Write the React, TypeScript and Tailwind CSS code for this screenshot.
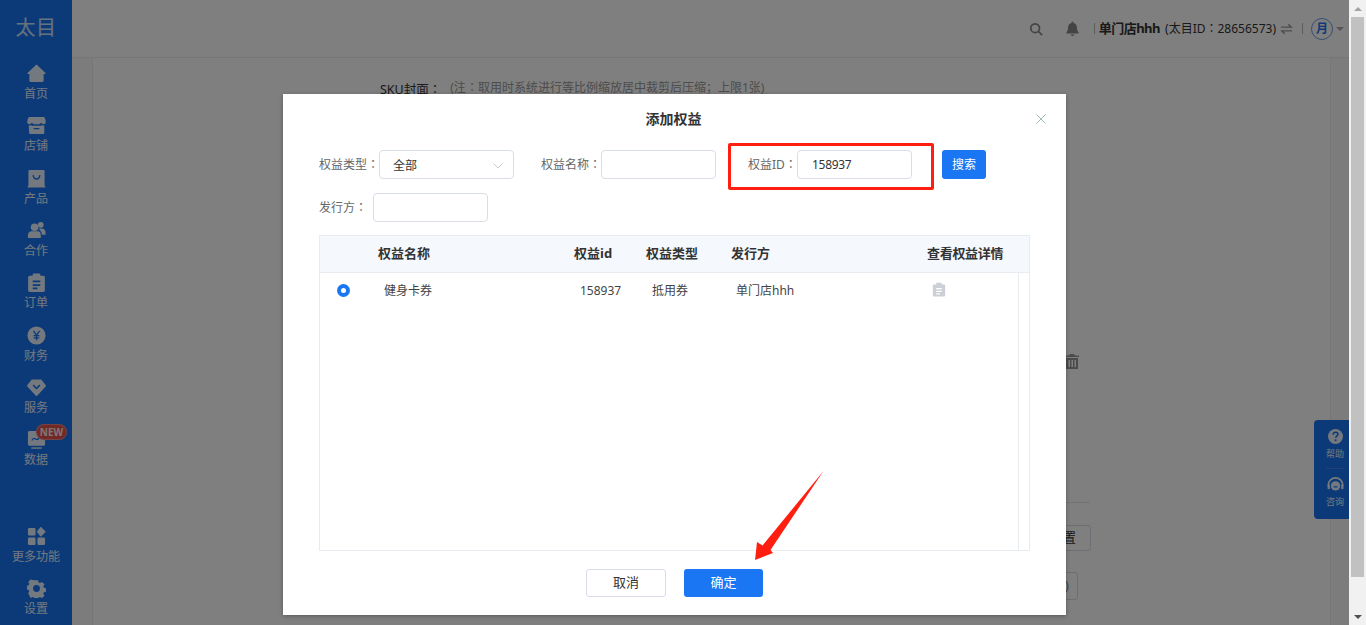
import React from 'react';

const FONT = '[font-family:"Noto_Sans","Noto_Sans_CJK_SC",sans-serif]';
const ICON = 'h-[19px] w-[19px]';

// full-width colon sits centred in its cell in the original, the JP face draws it that way
const Colon = () => <span className='[font-family:"Noto_Sans_CJK_JP",sans-serif]'>：</span>;

const HomeIcon = () => (
  <svg viewBox="0 0 20 20" className={ICON} fill="currentColor">
    <path d="M10 .5 0.5 9.600c-.3.4 0 .9.4.9h1.600v7.200c0 .7.5 1.300 1.200 1.300h12.600c.7 0 1.200-.6 1.200-1.300v-7.200h1.600c.4 0 .7-.5.4-.9z" />
  </svg>
);
const StoreIcon = () => (
  <svg viewBox="0 0 20 20" className={ICON} fill="currentColor">
    <path d="M3 1h14c1 0 1.800.7 2 1.600l.8 3.400c.1 1.500-1 2.600-2.400 2.600-1 0-1.900-.5-2.400-1.400h-.2c-.5.9-1.400 1.400-2.400 1.400H7.600c-1 0-1.900-.5-2.400-1.400H5c-.5.9-1.400 1.400-2.400 1.400C1.200 8.600.1 7.500.2 6L1 2.600C1.200 1.700 2 1 3 1z" />
    <path fillRule="evenodd" d="M1.800 10c.7.200 1.700.100 2.500-.3.800.4 1.500.5 2.300.5h6.800c.8 0 1.500-.1 2.300-.5.800.4 1.800.5 2.500.3v7.500c0 .8-.7 1.500-1.500 1.500h-13c-.8 0-1.400-.7-1.400-1.500zM7 12.500v1.500h6v-1.500z" />
  </svg>
);
const BagIcon = () => (
  <svg viewBox="0 0 20 20" className={ICON}>
    <path d="M3 1h14c1 0 1.500.6 1.500 1.500V17l1 2.500H.5l1-2.500V2.500C1.500 1.600 2 1 3 1z" fill="currentColor" />
    <path d="M6.500 6.500c.3 2.600 1.500 4 3.500 4s3.200-1.400 3.500-4" fill="none" stroke="#1875f0" strokeWidth="1.500" />
  </svg>
);
const UsersIcon = () => (
  <svg viewBox="0 0 20 20" className={ICON} fill="currentColor">
    <circle cx="8" cy="6.500" r="4" />
    <circle cx="14.500" cy="4" r="3" />
    <path d="M1 14.500c0-2.500 2-3.800 3.500-3.800h7c1.500 0 3 1.400 3 3.800V18H1z" />
    <path d="M13 8h2.500c2 0 4 1.500 4 4v2.500h-3.700C15.500 11.800 14 10 13 9.600z" />
  </svg>
);
const ClipboardIcon = ({ className = ICON }: { className?: string }) => (
  <svg viewBox="0 0 20 20" className={className} fill="currentColor">
    <path fillRule="evenodd" d="M6 1.500C6 .7 6.700.5 7.500.5h5c.8 0 1.500.2 1.500 1V3h3c1 0 1.800.8 1.800 1.800v13.400c0 1-.8 1.800-1.800 1.800H3c-1 0-1.800-.8-1.800-1.800V4.800C1.200 3.800 2 3 3 3h3zM6 8v1.800h8V8zm0 3.800v1.800h8v-1.800zm0 3.500V17h5v-1.700z" />
  </svg>
);
const YenIcon = () => (
  <svg viewBox="0 0 20 20" className={ICON}>
    <circle cx="10" cy="10" r="9.500" fill="currentColor" />
    <path d="M6.800 5.200 10 9.500l3.200-4.300M10 9.500v5.500M7 10.200h6M7 12.500h6" fill="none" stroke="#1875f0" strokeWidth="1.400" />
  </svg>
);
const DiamondIcon = () => (
  <svg viewBox="0 0 20 20" className={ICON}>
    <path d="M5 1.500h10l4.800 6.200c.2.300.2.700 0 1L11 18.500c-.5.600-1.500.600-2 0L.2 8.700c-.2-.3-.2-.7 0-1z" fill="currentColor" />
    <path d="m6.500 7.500 3.500 3.500 3.500-3.500" fill="none" stroke="#1875f0" strokeWidth="1.600" />
  </svg>
);
const ChartIcon = () => (
  <svg viewBox="0 0 20 20" className={ICON}>
    <path d="M2.500 1h15c.8 0 1.500.7 1.500 1.500v12.500c0 .8-.7 1.500-1.500 1.500h-15C1.700 16.500 1 15.800 1 15V2.500C1 1.700 1.700 1 2.500 1z" fill="currentColor" />
    <path d="M4.500 19h11" stroke="currentColor" strokeWidth="1.500" />
    <path d="M5 11c1.500-2.500 2.500-2.500 4-1.500s3 .5 4.500-2" fill="none" stroke="#1875f0" strokeWidth="1.300" />
  </svg>
);
const GridIcon = () => (
  <svg viewBox="0 0 20 20" className={ICON} fill="currentColor">
    <rect x="1" y="1" width="8" height="8" rx="1.500" />
    <path d="m15 .2 4.300 4.300c.3.300.3.700 0 1L15 9.800c-.3.300-.7.300-1 0l-3.300-4.300c-.3-.3-.3-.7 0-1L14 .2c.3-.2.700-.2 1 0z" />
    <rect x="1" y="11" width="8" height="8" rx="1.500" />
    <rect x="11" y="11" width="8" height="8" rx="1.500" />
  </svg>
);
const GearIcon = () => (
  <svg viewBox="0 0 20 20" className={ICON}>
    <path d="M8 .5h4l.6 2.400 1.700.7 2.100-1.300 2.800 2.800-1.300 2.100.7 1.700 2.400.6v4l-2.400.6-.7 1.700 1.300 2.100-2.800 2.800-2.100-1.300-1.700.7-.6 2.400H8l-.6-2.400-1.700-.7-2.100 1.300L.8 15.200l1.300-2.100-.7-1.700L-1 10.800v-4l2.400-.6.7-1.700L.8 2.400 3.600-.4z" transform="translate(.5 .9) scale(.93)" fill="currentColor" />
    <circle cx="10" cy="10" r="3.600" fill="#1875f0" />
  </svg>
);

const navTop = [
  { label: '首页', icon: <HomeIcon /> },
  { label: '店铺', icon: <StoreIcon /> },
  { label: '产品', icon: <BagIcon /> },
  { label: '合作', icon: <UsersIcon /> },
  { label: '订单', icon: <ClipboardIcon /> },
  { label: '财务', icon: <YenIcon /> },
  { label: '服务', icon: <DiamondIcon /> },
];

const NavItem = ({ label, icon, badge }: { label: string; icon: React.ReactNode; badge?: boolean }) => (
  <div className="relative flex h-[52.3px] flex-col items-center justify-center text-white/90">
    {icon}
    <span className="mt-[2px] text-[12px] leading-[17px]">{label}</span>
    {badge && (
      <span className="absolute left-[36px] top-[1px] flex h-[16px] w-[31px] items-center justify-center rounded-full border border-white/30 bg-[#e2504c] text-[10px] font-bold leading-none">
        NEW
      </span>
    )}
  </div>
);

const Sidebar = () => (
  <aside className="flex w-[72px] shrink-0 flex-col bg-[#1875f0]">
    <div className="flex h-[57px] items-center justify-center pb-[1px] text-[20px] tracking-[0.5px] text-white/80">太目</div>
    <nav>
      {navTop.map((n) => (
        <NavItem key={n.label} label={n.label} icon={n.icon} />
      ))}
      <NavItem label="数据" icon={<ChartIcon />} badge />
    </nav>
    <div className="mt-auto pb-[1px]">
      <NavItem label="更多功能" icon={<GridIcon />} />
      <NavItem label="设置" icon={<GearIcon />} />
    </div>
  </aside>
);

const Header = () => (
  <header className="flex h-[58px] shrink-0 items-center justify-end border-b border-[#ececec] bg-white pr-[5px] text-[#333]">
    <svg viewBox="0 0 16 16" className="h-[14px] w-[14px] text-[#888]" fill="none" stroke="currentColor" strokeWidth="2">
      <circle cx="7" cy="7" r="5" />
      <path d="m11 11 4 4" />
    </svg>
    <svg viewBox="0 0 16 16" className="ml-[22px] h-[15px] w-[15px] text-[#888]" fill="currentColor">
      <path d="M8 .5c.6 0 1 .4 1 1v.7c2.300.5 3.800 2.400 3.800 4.800 0 3 .7 4 1.700 5.200v1H1.500v-1C2.500 11 3.200 10 3.200 7c0-2.400 1.500-4.300 3.800-4.800v-.7c0-.6.400-1 1-1zM6 14.500h4c0 1-.9 1.500-2 1.500s-2-.5-2-1.500z" />
    </svg>
    <span className="ml-[14px] h-[11px] w-px bg-[#bbb]" />
    <span className="ml-[4px] text-[13px] font-bold tracking-[-0.5px]">单门店hhh</span>
    <span className="ml-[5px] text-[12px]">(太目ID<Colon />28656573)</span>
    <svg viewBox="0 0 14 12" className="ml-[4px] h-[12px] w-[13px] text-[#999]" fill="none" stroke="currentColor" strokeWidth="1.500">
      <path d="M1 4h11L9 1M13 8H2l3 3" />
    </svg>
    <span className="ml-[9px] h-[11px] w-px bg-[#bbb]" />
    <span className="ml-[8px] flex h-[22px] w-[22px] items-center justify-center rounded-full border border-[#6b9ee6] text-[12px] font-bold text-[#1875f0]">月</span>
    <span className="ml-[3px] h-0 w-0 border-x-[4px] border-t-[4px] border-x-transparent border-t-[#aaa]" />
  </header>
);

const PageBody = () => (
  <div className="flex min-h-0 flex-1 bg-[#f8f8f8] pl-[20px] pr-[18px]">
    <div className="flex flex-1 flex-col items-end border-x border-[#ececec] bg-white text-[#333]">
      <div className="mt-[19px] flex w-full items-start pl-[287px] text-[12px] leading-[18px]">
        <span className="mt-[3px] text-[12.5px]">SKU封面<Colon /></span>
        <span className="ml-[9px] mt-[1px] text-[#999]">(注<Colon />取用时系统进行等比例缩放居中裁剪后压缩；上限1张)</span>
      </div>
      <svg viewBox="0 0 14 15" className="mr-[251px] mt-[255px] h-[15px] w-[14px] text-[#999]" fill="currentColor">
        <path fillRule="evenodd" d="M5 0h4l1 1.500h4V3H0V1.500h4zM1 4h12v11H1zm2.500 2v7h1.500V6zm3 0v7H8V6zm3 0v7H11V6z" />
      </svg>
      <div className="mr-[240px] mt-[133px] h-px w-[300px] bg-[#e5e5e5]" />
      <div className="mr-[239px] mt-[22px] flex h-[26px] w-[100px] items-center justify-end rounded-[3px] border border-[#d9dde8] pr-[14px] text-[13px]">配置</div>
      <div className="mr-[252px] mt-[21px] flex h-[28px] w-[100px] items-center justify-end rounded-[3px] border border-[#d9dde8] pr-[8px] text-[13px] text-[#888]">(0)</div>
    </div>
  </div>
);

const FloatHelp = () => (
  <div className="absolute right-0 top-[420px] flex h-[99px] w-[35px] flex-col items-center rounded-l-[4px] bg-[#1875f0] pl-[7px] text-white/90">
    <svg viewBox="0 0 16 16" className="mt-[9px] h-[15px] w-[15px]">
      <circle cx="8" cy="8" r="8" fill="currentColor" />
      <path d="M5.500 6c0-1.500 1.100-2.500 2.600-2.500s2.500 1 2.500 2.200c0 1.800-2.500 1.800-2.500 3.700" fill="none" stroke="#1875f0" strokeWidth="1.700" />
      <circle cx="8.100" cy="12" r="1.100" fill="#1875f0" />
    </svg>
    <span className="mt-[3px] text-[9px] leading-[14px]">帮助</span>
    <span className="mt-[7px] h-px w-[18px] bg-white/15" />
    <svg viewBox="0 0 18 16" className="mt-[8px] h-[15px] w-[17px]">
      <path d="M1.500 9.500V8a7.500 7 0 0 1 15 0v1.500" fill="none" stroke="currentColor" strokeWidth="1.800" />
      <circle cx="9" cy="9.500" r="5" fill="currentColor" />
      <rect x="0.500" y="8" width="2.500" height="5" rx="1" fill="currentColor" />
      <rect x="15" y="8" width="2.500" height="5" rx="1" fill="currentColor" />
      <path d="M7 10.500h4" stroke="#1875f0" strokeWidth="1.300" />
    </svg>
    <span className="mt-[3px] text-[9px] leading-[14px]">咨询</span>
  </div>
);

const Field = ({ className = '', value }: { className?: string; value?: string }) => (
  <div className={`flex h-[29px] w-[115px] items-center rounded-[4px] border border-[#d9dde8] pl-[14px] text-[12px] tracking-[-0.3px] text-[#333] ${className}`}>
    {value}
  </div>
);

const COLS = 'grid grid-cols-[58px_196px_72px_85px_196px_1fr]';

const RightsTable = () => (
  <div className="mt-[13px] flex h-[316px] w-[711px] flex-col border border-[#e8ebf0]">
    <div className={`${COLS} h-[37px] shrink-0 items-center border-b border-[#e8ebf0] bg-[#f5f8fc] text-[13px] font-bold text-[#333]`}>
      <span />
      <span>权益名称</span>
      <span>权益id</span>
      <span>权益类型</span>
      <span>发行方</span>
      <span className="whitespace-nowrap tracking-[-0.3px]">查看权益详情</span>
    </div>
    <div className="flex min-h-0 flex-1">
      <div className={`${COLS} h-[35px] w-[698px] items-center text-[12px] text-[#444]`}>
        <span className="flex pl-[17px]">
          <span className="flex h-[13px] w-[13px] items-center justify-center rounded-full bg-[#1a76f2]">
            <span className="h-[5px] w-[5px] rounded-full bg-white" />
          </span>
        </span>
        <span className="pl-[6px]">健身卡券</span>
        <span className="pl-[6px]">158937</span>
        <span className="pl-[6px]">抵用券</span>
        <span className="whitespace-nowrap pl-[5px]">单门店hhh</span>
        <span className="-mt-[3px] pl-[5px] text-[#ccd0d6]">
          <ClipboardIcon className="h-[15px] w-[14px]" />
        </span>
      </div>
      <div className="ml-auto w-[11px] border-l border-[#e8ebf0]" />
    </div>
  </div>
);

const Modal = () => (
  <div className="absolute left-[283px] top-[94px] flex h-[521px] w-[783px] flex-col bg-white pl-[36px] shadow-[0_1px_4px_rgba(0,0,0,0.3)]">
    <div className="flex h-[56px] shrink-0 items-start justify-center pr-[38px] pt-[15px] text-[14px] font-bold leading-[20px] text-[#333]">添加权益</div>
    <button type="button" className="absolute right-[20px] top-[20px] text-[#9dbcae]">
      <svg viewBox="0 0 10 10" className="h-[10px] w-[10px]" fill="none" stroke="currentColor" strokeWidth="1">
        <path d="m.5.5 9 9M9.500.5l-9 9" />
      </svg>
    </button>
    <div className="flex items-center text-[12px] text-[#666]">
      <span className="w-[60px] whitespace-nowrap">权益类型<Colon /></span>
      <div className="flex h-[29px] w-[135px] items-center justify-between rounded-[4px] border border-[#d9dde8] pl-[13px] pr-[10px] pt-[2px] text-[#333]">
        全部
        <svg viewBox="0 0 10 6" className="h-[6px] w-[10px] text-[#c8ccd4]" fill="none" stroke="currentColor">
          <path d="m.5.5 4.500 4.500L9.500.5" />
        </svg>
      </div>
      <span className="ml-[27px] w-[60px] whitespace-nowrap">权益名称<Colon /></span>
      <Field />
      <span className="ml-[32px] w-[49px] whitespace-nowrap">权益ID<Colon /></span>
      <Field value="158937" />
      <button type="button" className="ml-[30px] h-[29px] w-[44px] rounded-[3px] bg-[#1a76f2] text-white">搜索</button>
    </div>
    <div className="mt-[14px] flex items-center text-[12px] text-[#666]">
      <span className="w-[54px] whitespace-nowrap">发行方<Colon /></span>
      <Field />
    </div>
    <RightsTable />
    <div className="mt-[18px] flex justify-center gap-[18px] pr-[36px] text-[13px]">
      <button type="button" className="h-[28px] w-[80px] rounded-[3px] border border-[#d9dde8] text-[#333]">取消</button>
      <button type="button" className="h-[28px] w-[79px] rounded-[3px] bg-[#1a76f2] text-white">确定</button>
    </div>
  </div>
);

const Scrollbar = () => (
  <div className="flex w-[17px] shrink-0 flex-col items-center bg-[#f1f1f1]">
    <div className="flex h-[17px] items-center justify-center">
      <span className="h-0 w-0 border-x-[4px] border-b-[4px] border-x-transparent border-b-[#a3a3a3]" />
    </div>
    <div className="h-[560px] w-[13px] bg-[#c1c1c1]" />
    <div className="mt-auto flex h-[17px] items-center justify-center">
      <span className="h-0 w-0 border-x-[4px] border-t-[4px] border-x-transparent border-t-[#505050]" />
    </div>
  </div>
);

export default function App() {
  return (
    <div className={`flex h-[625px] w-[1366px] overflow-hidden ${FONT}`}>
      <div className="relative flex min-w-0 flex-1">
        <Sidebar />
        <main className="flex min-w-0 flex-1 flex-col">
          <Header />
          <PageBody />
        </main>
        <FloatHelp />
        {/* dialog backdrop, the scrollbar stays outside it */}
        <div className="absolute inset-0 bg-black/50" />
        <Modal />
        {/* red markup drawn on the screenshot */}
        <div className="absolute left-[728px] top-[143px] h-[47px] w-[206px] rounded-[2px] border-[3px] border-[#ff1f10]" />
        <svg className="absolute left-[750px] top-[468px] h-[96px] w-[78px]" viewBox="750 468 78 96">
          <path d="M823.500 471 770.500 550 773 553 755 560 757 542 762.500 545.500z" fill="#ff1f10" />
        </svg>
      </div>
      <Scrollbar />
    </div>
  );
}
